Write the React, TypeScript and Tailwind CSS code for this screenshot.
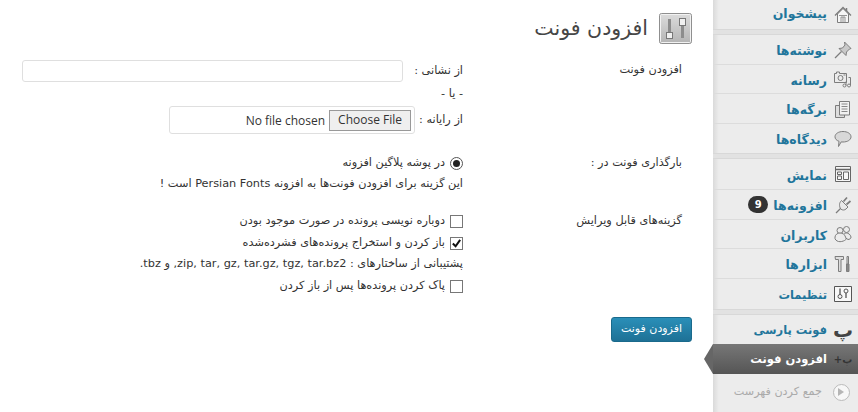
import React, { FC } from "react";

const FONT = "font-['DejaVu_Sans','Noto_Sans',sans-serif]";

const ic = "w-[18px] h-[18px] text-[#7d7d7d]";

const HomeIcon = () => (
  <svg viewBox="0 0 18 18" className={ic} fill="#eee" stroke="currentColor" strokeWidth="1">
    <path d="M3.500 8v8.500h11V8L9 2.500z" fill="#f6f6f6" />
    <path d="M1 9.500 9 1.500l8 8" fill="none" strokeWidth="1.300" />
    <path d="M12.500 2v3" fill="none" strokeWidth="1.500" />
    <path d="M7 16.500V11h4v5.500M9 11v5.500M5 9.500h8" fill="none" strokeWidth=".8" />
  </svg>
);
const PinIcon = () => (
  <svg viewBox="0 0 18 18" className={ic} fill="#c9c9c9" stroke="currentColor" strokeWidth="1">
    <path d="m10.500 1 6.500 6.500-1.500.5-3 3-.5 3.500L5 7.500 8.500 7l2.500-3z" />
    <path d="M7.500 10.500 1 17" fill="none" strokeWidth="1.200" />
  </svg>
);
const MediaIcon = () => (
  <svg viewBox="0 0 18 18" className={ic} fill="none" stroke="currentColor" strokeWidth="1">
    <path d="M.5 3.500h2V2h3v1.500h7v9H.5z" />
    <circle cx="6.500" cy="8" r="2.500" />
    <path d="M9.500 5h2" />
    <circle cx="10.500" cy="15.500" r="1.500" />
    <circle cx="15" cy="15.500" r="1.500" />
    <path d="M12 15.500v-4M16.500 15.500V7.500h-2" />
  </svg>
);
const PagesIcon = () => (
  <svg viewBox="0 0 18 18" className={ic} fill="#ddd" stroke="currentColor" strokeWidth="1">
    <path d="M1.500 5.500h9v12h-9z" />
    <path d="M5.500 1.500h10v13.500h-10z" fill="#f2f2f2" />
    <path d="M7.500 4h6M7.500 6.500h6M7.500 9h6M7.500 11.500h6" strokeWidth=".9" />
  </svg>
);
const CommentIcon = () => (
  <svg viewBox="0 0 18 18" className={ic} fill="#d8d8d8" stroke="currentColor" strokeWidth="1">
    <path d="M9 1.500c4.500 0 8 2.200 8 5.300s-3.500 5.200-8 5.200c-.6 0-1.200 0-1.800-.1L4.500 16.500 5 11.300C2.500 10.500 1 8.800 1 6.800 1 3.700 4.500 1.500 9 1.500z" />
  </svg>
);
const AppearanceIcon = () => (
  <svg viewBox="0 0 18 18" className={ic} fill="none" stroke="#666" strokeWidth="1">
    <path d="M1.500 1.500h15v15h-15z" fill="#f6f6f6" />
    <path d="M1.500 4.500h15" strokeWidth="1.500" />
    <path d="M3.500 7h4v2.500h-4zM3.500 11h4v3.500h-4zM9.500 7h5v7.500h-5z" />
  </svg>
);
const PluginIcon = () => (
  <svg viewBox="0 0 18 18" className={ic} fill="#e8e8e8" stroke="currentColor" strokeWidth="1">
    <path d="M7.500 4.500 14 11l-2 2c-1.500 1.300-3.500 1.300-5 .2C5.700 12 5.500 9.500 5.500 8.500 5.500 7 6.500 5.500 7.500 4.500z" />
    <path d="M9.500 5.500 13 1.500M12.500 8.500 16.500 5" strokeWidth="1.700" />
    <path d="M6.500 12.500 2 17" fill="none" strokeWidth="1.300" />
  </svg>
);
const UsersIcon = () => (
  <svg viewBox="0 0 18 18" className={ic} fill="#ececec" stroke="currentColor" strokeWidth="1">
    <circle cx="12.500" cy="4.500" r="3" />
    <path d="M9 11c.5-2 2-3 3.500-3s4 1.300 4.500 4c.2 1.500-1.500 2.500-3 2.500z" />
    <circle cx="6" cy="5.500" r="3" />
    <path d="M1 12c.3-2.500 2.500-4 5-4s5 1.500 5.500 4c.5 2 1.500 2-1 3.500-1.500.8-4 1.500-6 1s-4-2-3.500-4.500z" />
  </svg>
);
const ToolsIcon = () => (
  <svg viewBox="0 0 18 18" className={ic} fill="#ddd" stroke="currentColor" strokeWidth="1">
    <path d="M1 1.500h8.500v3H7v12H4.500v-12H1.500z" />
    <path d="M12.500 9h2.500v7.500h-2.500z" fill="#888" />
    <path d="M13 1.500h1.500V9H13z" />
  </svg>
);
const SettingsIcon = () => (
  <svg viewBox="0 0 18 18" className={ic} fill="none" stroke="#555" strokeWidth="1">
    <path d="M.5 1.500h17v15H.5z" fill="#f8f8f8" />
    <path d="M6 3.500v6M12 8v5" strokeWidth="1.300" />
    <circle cx="6" cy="11.500" r="2" />
    <circle cx="12" cy="6" r="2" />
  </svg>
);

type MenuItem = {
  label: string;
  icon: React.ReactNode;
  badge?: string;
  noBorder?: boolean;
  height: string;
  textSize?: string;
  textPad?: string;
};

const Row: FC<MenuItem> = ({ label, icon, badge, noBorder, height, textSize, textPad }) => (
  <div className={`flex items-center ${height} ${noBorder ? "" : "border-b border-[#dcdcdc]"}`}>
    <div className="flex w-[30px] shrink-0 justify-center">{icon}</div>
    <span className={`pr-[1px] font-bold text-[#21759b] ${textSize ?? "text-[12.5px]"} ${textPad ?? "pt-[4px]"}`}>{label}</span>
    {badge && (
      <span className="mr-[5px] flex h-[17px] w-[20px] items-center justify-center rounded-full bg-[#333] text-[10px] font-bold text-white">
        {badge}
      </span>
    )}
  </div>
);

const Separator = () => <div className="h-[6px] border-y border-[#d8d8d8] bg-[#e2e2e2]" />;

const Sidebar = () => (
  <aside className="relative h-[412px] w-[145px] shrink-0 bg-[linear-gradient(to_left,#ececec_96%,#dadada)]">
    <Row label="پیشخوان" icon={<HomeIcon />} noBorder height="h-[29px]" textPad="pt-0" />
    <Separator />
    <Row label="نوشته‌ها" icon={<PinIcon />} height="h-[30px]" />
    <Row label="رسانه" icon={<MediaIcon />} height="h-[29px]" />
    <Row label="برگه‌ها" icon={<PagesIcon />} height="h-[30px]" />
    <Row label="دیدگاه‌ها" icon={<CommentIcon />} noBorder height="h-[29px]" />
    <Separator />
    <Row label="نمایش" icon={<AppearanceIcon />} height="h-[31px]" />
    <Row label="افزونه‌ها" icon={<PluginIcon />} badge="9" height="h-[30px]" />
    <Row label="کاربران" icon={<UsersIcon />} height="h-[29px]" />
    <Row label="ابزارها" icon={<ToolsIcon />} height="h-[30px]" />
    <Row label="تنظیمات" icon={<SettingsIcon />} noBorder height="h-[30px]" textSize="text-[11.5px]" />
    <Separator />
    <div className="flex h-[29px] items-center">
      <span className="flex w-[30px] shrink-0 justify-center text-[20px] font-bold leading-none text-[#444]">پ</span>
      <span className="pr-[1px] pt-[2px] text-[11.5px] font-bold text-[#21759b]">فونت پارسی</span>
    </div>
    <div className="relative flex h-[30px] items-center bg-[linear-gradient(#777,#555)]">
      <span className="absolute left-[-9px] top-0 h-[30px] w-[9px] bg-[#666] [clip-path:polygon(100%_0,0_50%,100%_100%)]" />
      <span className="flex w-[30px] shrink-0 justify-center text-[10px] font-bold text-[#333]">پ+</span>
      <span className="pr-[1px] pt-[2px] text-[11.5px] font-bold text-white">افزودن فونت</span>
    </div>
    <div className="flex h-[36px] items-center">
      <div className="flex w-[30px] shrink-0 justify-center pr-[4px]">
        <span className="flex h-[17px] w-[17px] items-center justify-center rounded-full border border-[#bbb] bg-[#f7f7f7]">
          <span className="h-0 w-0 border-y-[4px] border-r-0 border-l-[6px] border-y-transparent border-l-[#b5b5b5]" />
        </span>
      </div>
      <span className="pr-[6px] text-[11.2px] text-[#aaa]">جمع کردن فهرست</span>
    </div>
  </aside>
);

const TitleIcon = () => (
  <svg viewBox="0 0 33 31" className="h-[31px] w-[33px]">
    <defs>
      <linearGradient id="ti" x1="0" y1="0" x2="0" y2="1">
        <stop offset="0" stopColor="#dcdcdc" />
        <stop offset="1" stopColor="#b4b4b4" />
      </linearGradient>
    </defs>
    <rect x=".5" y=".5" width="32" height="30" rx="2" fill="url(#ti)" stroke="#8f8f8f" />
    <rect x="1.500" y="1.500" width="30" height="28" rx="1" fill="none" stroke="#f2f2f2" />
    <path d="M9 6h3v13H9zM22 13h3v12h-3z" fill="#8c8c8c" />
    <rect x="7.500" y="19.500" width="6" height="6" fill="#f0f0f0" stroke="#777" />
    <rect x="20.500" y="5.500" width="6" height="7" fill="#f0f0f0" stroke="#777" />
  </svg>
);

const Box: FC<{ checked?: boolean }> = ({ checked }) => (
  <span className="flex h-[13px] w-[13px] shrink-0 items-center justify-center border border-[#777] bg-white">
    {checked && (
      <svg viewBox="0 0 12 12" className="h-[11px] w-[11px]" fill="none" stroke="#111" strokeWidth="2.200">
        <path d="m2 6 3 3 5-7" />
      </svg>
    )}
  </span>
);

const Option: FC<{ checked?: boolean; label: string }> = ({ checked, label }) => (
  <div className="flex h-[22px] items-center gap-[5px]">
    <Box checked={checked} />
    <span>{label}</span>
  </div>
);

const Main = () => (
  <main className="min-w-0 flex-1 pr-[21px] text-[11.3px] text-[#333]">
    <div className="flex h-[56px] items-start gap-[11px] pt-[13px]">
      <TitleIcon />
      <h2 className="text-[20.5px] leading-[30px] text-[#464646]">افزودن فونت</h2>
    </div>

    <div className="grid grid-cols-[229px_1fr] pt-[4px]">
      <div className="pr-[10px] leading-[20px]">افزودن فونت</div>
      <div className="h-[92px]">
        <div className="flex h-[22px] items-center gap-[6px]">
          <span className="w-[54px] shrink-0">از نشانی :</span>
          <input type="text" className="h-[22px] w-[381px] rounded-[3px] border border-[#dfdfdf] bg-white" />
        </div>
        <div className="flex h-[24px] items-center">- یا -</div>
        <div className="flex h-[28px] items-center gap-[4px]">
          <span className="shrink-0">از رایانه :</span>
          <div className="flex h-[28px] w-[246px] items-center rounded-[3px] border border-[#dfdfdf] px-[3px] text-[12px]">
            <input type="file" className="w-full font-['Open_Sans',sans-serif] text-[12px] text-[#333] file:ml-[4px] file:h-[21px] file:border file:border-[#999] file:bg-[#efefef] file:px-[8px]" />
          </div>
        </div>
      </div>

      <div className="pr-[10px] leading-[22px]">بارگذاری فونت در :</div>
      <div className="h-[58px]">
        <div className="flex h-[22px] items-center gap-[5px]">
          <span className="flex h-[13px] w-[13px] shrink-0 items-center justify-center rounded-full border border-[#555] bg-white">
            <span className="h-[7px] w-[7px] rounded-full bg-[#222]" />
          </span>
          <span>در پوشه پلاگین افزونه</span>
        </div>
        <div className="flex h-[20px] items-center">این گزینه برای افزودن فونت‌ها به افزونه Persian Fonts است !</div>
      </div>

      <div className="pr-[10px] leading-[22px]">گزینه‌های قابل ویرایش</div>
      <div>
        <Option label="دوباره نویسی پرونده در صورت موجود بودن" />
        <Option checked label="باز کردن و استخراج پرونده‌های فشرده‌شده" />
        <div className="flex h-[21px] items-center">پشتیبانی از ساختارهای : zip, tar, gz, tar.gz, tgz, tar.bz2, و tbz.</div>
        <Option label="پاک کردن پرونده‌ها پس از باز کردن" />
      </div>
    </div>

    <button className="mt-[20px] h-[25px] w-[81px] rounded-[3px] border border-[#1a6a8c] bg-[linear-gradient(#2a8fb8,#1e7196)] text-[11px] text-white">
      افزودن فونت
    </button>
  </main>
);

export default function App() {
  return (
    <div dir="rtl" className={`flex h-[412px] w-[858px] overflow-hidden bg-white ${FONT}`}>
      <Sidebar />
      <Main />
    </div>
  );
}
